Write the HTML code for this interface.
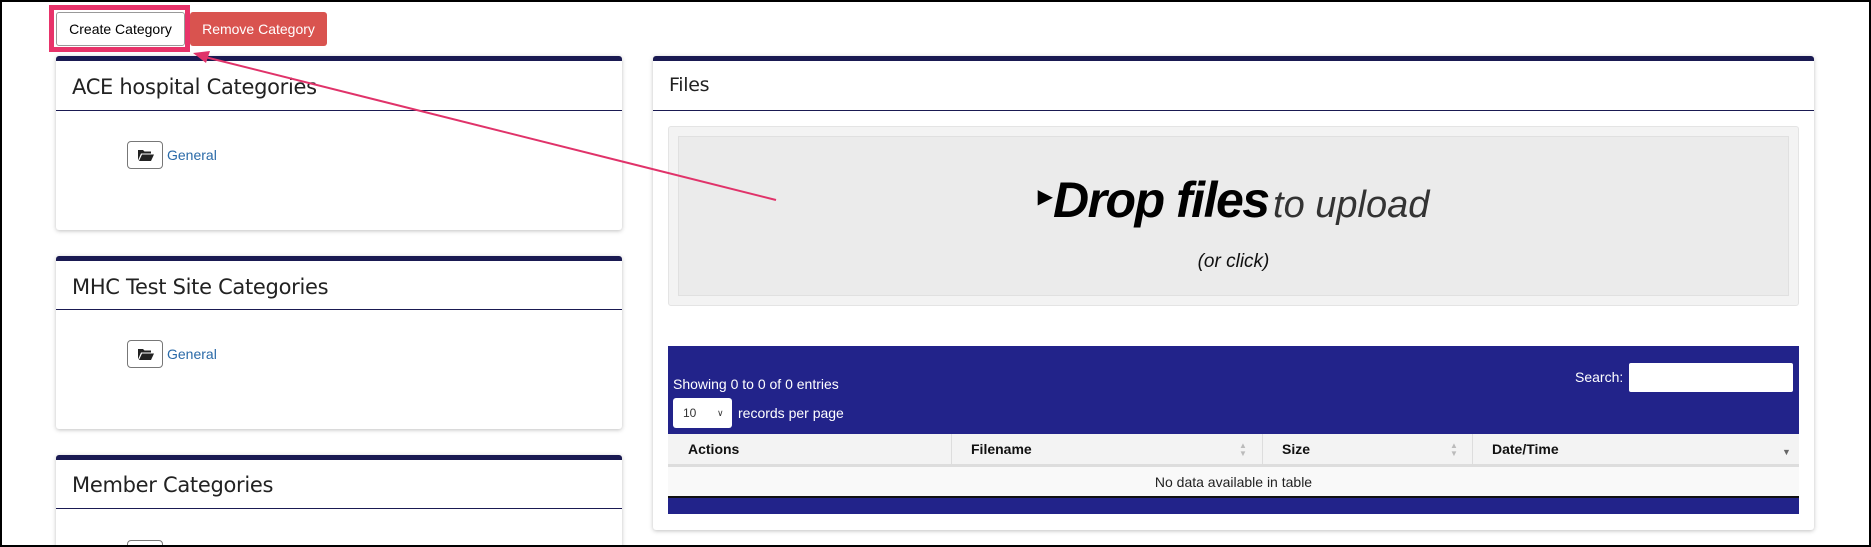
<!DOCTYPE html>
<html style="overflow:hidden"><head><meta charset="utf-8"><style>
*{box-sizing:border-box;margin:0;padding:0}
html,body{width:1871px;height:547px;overflow:hidden}
body{background:#fff;position:relative;font-family:"Liberation Sans",sans-serif}
#wrap{position:absolute;left:0;top:0;width:1871px;height:547px;overflow:hidden}
.abs{position:absolute}
.panel{position:absolute;background:#fff;border-top:5px solid #1a1a52;border-radius:3px;box-shadow:0 1px 4px rgba(0,0,0,.25)}
.panel h3{position:absolute;left:16px;font-weight:normal;font-size:21px;color:#222;font-family:"DejaVu Sans","Liberation Sans",sans-serif;letter-spacing:-0.3px}
.hline{position:absolute;left:0;right:0;height:1px;background:#1a1a52}
.fbtn{position:absolute;width:36px;height:28px;border:1px solid #777;border-radius:4px;background:#fff}
.gen{position:absolute;color:#2a6aa8;font-size:14px}
.th{position:absolute;top:0;height:30px;line-height:30px;font-weight:bold;font-size:14px;color:#111}
</style></head><body><div id="wrap">
<div class="abs" style="left:49px;top:5px;width:141px;height:47px;border:5px solid #e8336a"></div>
<div class="abs" style="left:56px;top:12px;width:129px;height:34px;border:1px solid #999;border-radius:3px;background:#fff;font-size:14px;line-height:32px;text-align:center;color:#000">Create Category</div>
<div class="abs" style="left:190px;top:12px;width:137px;height:34px;border-radius:3px;background:#d9534f;font-size:14px;line-height:34px;text-align:center;color:#fff">Remove Category</div>

<div class="panel" style="left:56px;top:56px;width:566px;height:174px">
<h3 style="top:14px">ACE hospital Categories</h3><div class="hline" style="top:49px"></div>
<div class="fbtn" style="left:71px;top:80px"><svg width="34" height="26" viewBox="0 0 34 26"><path d="M10 8h5l1.5 1.5H23v2H13l-3 7z M11 19l3-6.5h12l-3 6.5z" fill="#222"/></svg></div>
<div class="gen" style="left:111px;top:86px">General</div>
</div>
<div class="panel" style="left:56px;top:256px;width:566px;height:173px">
<h3 style="top:14px">MHC Test Site Categories</h3><div class="hline" style="top:48px"></div>
<div class="fbtn" style="left:71px;top:79px"><svg width="34" height="26" viewBox="0 0 34 26"><path d="M10 8h5l1.5 1.5H23v2H13l-3 7z M11 19l3-6.5h12l-3 6.5z" fill="#222"/></svg></div>
<div class="gen" style="left:111px;top:85px">General</div>
</div>
<div class="panel" style="left:56px;top:455px;width:566px;height:92px;overflow:hidden;border-radius:3px 3px 0 0">
<h3 style="top:13px">Member Categories</h3><div class="hline" style="top:48px"></div>
<div class="fbtn" style="left:71px;top:80px"></div>
</div>

<div class="panel" style="left:653px;top:56px;width:1161px;height:474px">
<h3 style="top:13px;font-size:19px">Files</h3><div class="hline" style="top:49px"></div>
<div class="abs" style="left:15px;top:65px;width:1131px;height:180px;background:#f3f3f3;border:1px solid #e4e4e4;border-radius:3px">
<div class="abs" style="left:9px;top:9px;width:1111px;height:160px;background:#ebebeb;border:1px solid #e0e0e0">
<div class="abs" style="left:0;right:0;top:34px;text-align:center;white-space:nowrap;color:#000">
<span style="font-size:20px;vertical-align:14px">&#x25B6;</span><span style="font-size:50px;font-weight:bold;font-style:italic;letter-spacing:-1.5px">Drop files</span> <span style="font-size:38px;font-style:italic;color:#333">to upload</span>
</div>
<div class="abs" style="left:0;right:0;top:114px;text-align:center;font-size:19px;font-style:italic;color:#111">(or click)</div>
</div></div>
<div class="abs" style="left:15px;top:285px;width:1131px;height:168px;background:#22238a">
<div class="abs" style="left:5px;top:30px;color:#fff;font-size:14px">Showing 0 to 0 of 0 entries</div>
<div class="abs" style="left:5px;top:52px;width:59px;height:30px;background:#fff;border-radius:3px;font-size:12px;line-height:30px;padding-left:10px;color:#333">10<span style="position:absolute;left:44px;font-size:9px">&#x2228;</span></div>
<div class="abs" style="left:70px;top:59px;color:#fff;font-size:14px">records per page</div>
<div class="abs" style="left:907px;top:23px;color:#fff;font-size:14px">Search:</div>
<div class="abs" style="left:961px;top:17px;width:164px;height:29px;background:#fff;border-radius:2px"></div>
<div class="abs" style="left:0;top:88px;width:1131px;height:33px;background:#f3f3f3;border-bottom:3px solid #ddd">
<div class="th" style="left:20px">Actions</div>
<div class="abs" style="left:283px;top:0;width:1px;height:30px;background:#ddd"></div>
<div class="th" style="left:303px">Filename</div>
<div class="abs" style="left:594px;top:0;width:1px;height:30px;background:#ddd"></div>
<div class="th" style="left:614px">Size</div>
<div class="abs" style="left:804px;top:0;width:1px;height:30px;background:#ddd"></div>
<div class="th" style="left:824px">Date/Time</div>
<div class="abs" style="left:571px;top:8px;font-size:8px;color:#bbb;line-height:8px">&#x25B2;<br>&#x25BC;</div>
<div class="abs" style="left:782px;top:8px;font-size:8px;color:#bbb;line-height:8px">&#x25B2;<br>&#x25BC;</div>
<div class="abs" style="left:1114px;top:13px;font-size:9px;color:#666">&#x25BC;</div>
</div>
<div class="abs" style="left:0;top:121px;width:1131px;height:31px;background:#f9f9f9;border-bottom:2px solid #111;text-align:center;line-height:30px;font-size:14px;color:#222">No data available in table</div>
</div>
</div>

<svg class="abs" style="left:0;top:0" width="1871" height="547">
<line x1="776" y1="200" x2="205" y2="57" stroke="#e0336a" stroke-width="2"/>
<polygon points="193,53 210,51 206,63" fill="#e0336a"/>
</svg>
<div class="abs" style="left:0;top:0;width:1871px;height:547px;border:2px solid #000"></div>
</div></body></html>
